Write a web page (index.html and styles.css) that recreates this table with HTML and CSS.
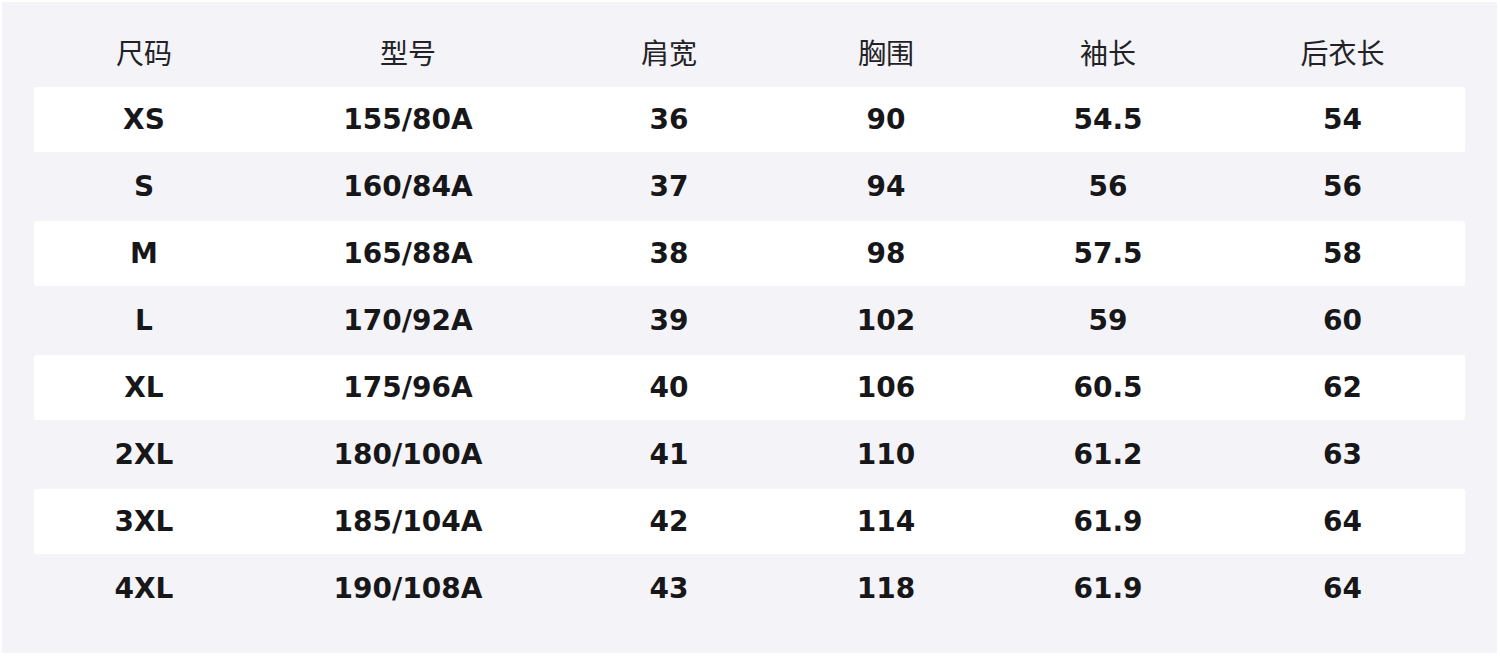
FILE: index.html
```html
<!DOCTYPE html>
<html lang="zh">
<head>
<meta charset="utf-8">
<title>尺码表</title>
<link rel="stylesheet" href="styles.css">
</head>
<body>
<div class="panel">
  <div class="row head">
    <div>尺码</div><div>型号</div><div>肩宽</div><div>胸围</div><div>袖长</div><div>后衣长</div>
  </div>
  <div class="row alt"><div>XS</div><div>155/80A</div><div>36</div><div>90</div><div>54.5</div><div>54</div></div>
  <div class="row"><div>S</div><div>160/84A</div><div>37</div><div>94</div><div>56</div><div>56</div></div>
  <div class="row alt"><div>M</div><div>165/88A</div><div>38</div><div>98</div><div>57.5</div><div>58</div></div>
  <div class="row"><div>L</div><div>170/92A</div><div>39</div><div>102</div><div>59</div><div>60</div></div>
  <div class="row alt"><div>XL</div><div>175/96A</div><div>40</div><div>106</div><div>60.5</div><div>62</div></div>
  <div class="row"><div>2XL</div><div>180/100A</div><div>41</div><div>110</div><div>61.2</div><div>63</div></div>
  <div class="row alt"><div>3XL</div><div>185/104A</div><div>42</div><div>114</div><div>61.9</div><div>64</div></div>
  <div class="row"><div>4XL</div><div>190/108A</div><div>43</div><div>118</div><div>61.9</div><div>64</div></div>
</div>
</body>
</html>
```
FILE: styles.css
```css
html, body {
  margin: 0;
  padding: 0;
  background: #ffffff;
}
.panel {
  margin: 2px 0 0 2px;
  width: 1495px;
  height: 651px;
  box-sizing: border-box;
  padding: 16px 32px 0 32px;
  background: #f3f3f8;
  display: flex;
  flex-direction: column;
  gap: 2px;
}
.row {
  display: grid;
  grid-template-columns: 220px 308px 214px 220px 224px 1fr;
  height: 65px;
  margin-bottom: 0;
  font-family: "DejaVu Sans", sans-serif;
  font-weight: bold;
  font-size: 28px;
  color: #17171a;
  border-radius: 2px;
}
.row > div {
  display: flex;
  align-items: center;
  justify-content: center;
}
.row.alt {
  background: #ffffff;
}
.row.head {
  height: 67px;
  font-family: "Noto Sans CJK SC", sans-serif;
  font-weight: normal;
  color: #222226;
}
```
